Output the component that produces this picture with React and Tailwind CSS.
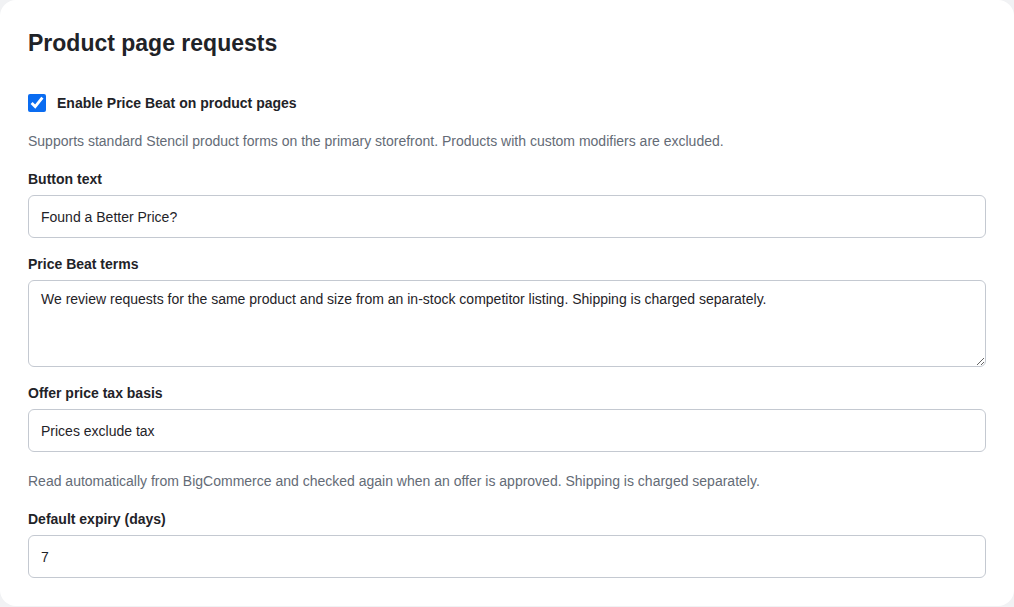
import { useState } from "react";

const font = { fontFamily: '"Liberation Sans", Arial, sans-serif' };

function Field({ label, className = "", children }) {
  return (
    <div className={className}>
      <label className="block text-sm leading-5 font-bold text-[#1f2328] mb-1.5">{label}</label>
      {children}
    </div>
  );
}

export default function App() {
  const [enabled, setEnabled] = useState(true);
  const [buttonText, setButtonText] = useState("Found a Better Price?");
  const [terms, setTerms] = useState(
    "We review requests for the same product and size from an in-stock competitor listing. Shipping is charged separately."
  );
  const [taxBasis, setTaxBasis] = useState("Prices exclude tax");
  const [expiry, setExpiry] = useState("7");

  const inputCls =
    "block w-full h-[43px] px-3 rounded-md border border-[#c4c9d1] bg-white text-sm text-[#1f2328] outline-none";

  return (
    <div className="min-h-screen bg-[#f1f2f4]" style={font}>
      <div className="bg-white rounded-2xl px-7 pt-[29px] pb-7">
        <h2 className="text-[23px] leading-7 font-bold text-[#1f2328]">Product page requests</h2>

        {/* Toggle */}
        <label className="mt-9 flex items-center gap-[11px] h-5 cursor-pointer">
          <input
            type="checkbox"
            checked={enabled}
            onChange={(e) => setEnabled(e.target.checked)}
            className="w-[18px] h-[18px] m-0 accent-[#0a6cf1]"
          />
          <span className="text-sm font-bold text-[#1f2328]">Enable Price Beat on product pages</span>
        </label>
        <p className="mt-[18px] text-sm leading-5 text-[#646b76]">
          Supports standard Stencil product forms on the primary storefront. Products with custom modifiers are excluded.
        </p>

        <Field label="Button text" className="mt-[18px]">
          <input className={inputCls} value={buttonText} onChange={(e) => setButtonText(e.target.value)} />
        </Field>

        <Field label="Price Beat terms" className="mt-4">
          <textarea
            className="block w-full h-[87px] px-3 py-2 rounded-md border border-[#c4c9d1] bg-white text-sm leading-5 text-[#1f2328] outline-none"
            value={terms}
            onChange={(e) => setTerms(e.target.value)}
          />
        </Field>

        <Field label="Offer price tax basis" className="mt-4">
          <input className={inputCls} value={taxBasis} onChange={(e) => setTaxBasis(e.target.value)} />
        </Field>
        <p className="mt-[19px] text-sm leading-5 text-[#646b76]">
          Read automatically from BigCommerce and checked again when an offer is approved. Shipping is charged separately.
        </p>

        <Field label="Default expiry (days)" className="mt-[18px]">
          <input className={inputCls} value={expiry} onChange={(e) => setExpiry(e.target.value)} />
        </Field>
      </div>
    </div>
  );
}
